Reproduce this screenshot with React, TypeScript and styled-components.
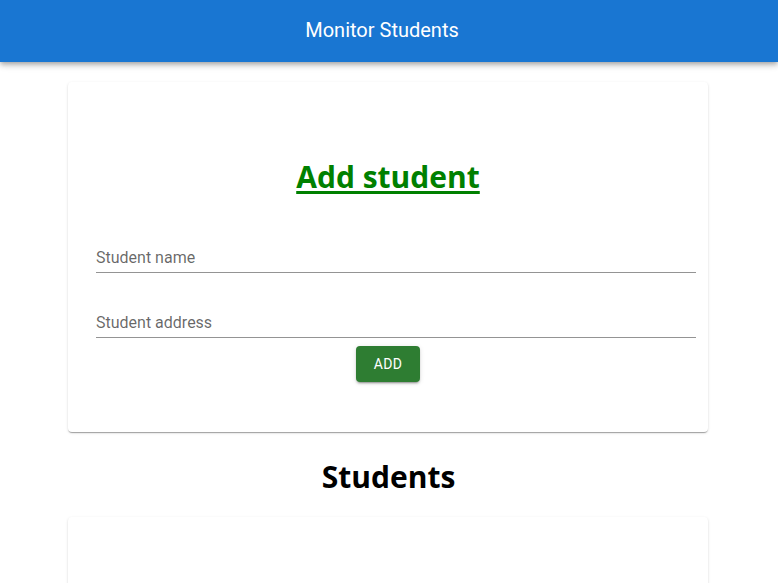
import React from "react";
import styled, { createGlobalStyle } from "styled-components";

const GlobalStyle = createGlobalStyle`
  html, body { margin: 0; padding: 0; background: #ffffff; }
  body { font-family: Roboto, "Liberation Sans", Arial, sans-serif; }
  * { box-sizing: border-box; }
`;

const AppBar = styled.header`
  height: 62px;
  padding: 0 14px 2px 0;
  background: #1976d2;
  color: #ffffff;
  display: flex;
  align-items: center;
  justify-content: center;
  box-shadow: 0px 2px 4px -1px rgba(0,0,0,0.2), 0px 4px 5px 0px rgba(0,0,0,0.14), 0px 1px 10px 0px rgba(0,0,0,0.12);
  position: relative;
  z-index: 1;
`;

const AppTitle = styled.div`
  font-family: Roboto, "Liberation Sans", Arial, sans-serif;
  font-size: 20px;
  font-weight: 400;
  line-height: 24px;
`;

const Main = styled.main`
  display: flex;
  flex-direction: column;
  align-items: center;
  padding-top: 20px;
`;

const Card = styled.section<{ $pt?: number; $pb?: number }>`
  width: 640px;
  margin-left: -2px;
  background: #ffffff;
  border-radius: 4px;
  box-shadow: 0px 2px 1px -1px rgba(0,0,0,0.2), 0px 1px 1px 0px rgba(0,0,0,0.14), 0px 1px 3px 0px rgba(0,0,0,0.12);
  padding: ${(p) => p.$pt ?? 0}px 12px ${(p) => p.$pb ?? 0}px 28px;
  display: flex;
  flex-direction: column;
  min-height: 100px;
`;

const Heading = styled.h1<{ $color: string; $underline?: boolean; $shift?: number }>`
  margin: 0 0 0 ${(p) => p.$shift ?? 0}px;
  font-family: "Open Sans", "Noto Sans", sans-serif;
  font-weight: 700;
  font-size: 30px;
  line-height: 40px;
  text-align: center;
  color: ${(p) => p.$color};
  text-decoration: ${(p) => (p.$underline ? "underline" : "none")};
  text-decoration-thickness: 3px;
  text-underline-offset: 3px;
`;

const Field = styled.label<{ $mt: number }>`
  display: block;
  margin-top: ${(p) => p.$mt}px;
  padding: 1px 0 2px;
  border-bottom: 1px solid rgba(0, 0, 0, 0.42);
`;

const FieldLabel = styled.span`
  display: block;
  font-family: Roboto, "Liberation Sans", Arial, sans-serif;
  font-size: 16px;
  line-height: 24px;
  color: rgba(0, 0, 0, 0.6);
`;

const ButtonRow = styled.div`
  display: flex;
  justify-content: center;
  margin-top: 8px;
  margin-left: -16px;
`;

const Button = styled.button`
  height: 36px;
  min-width: 64px;
  padding: 6px 16px;
  border: none;
  border-radius: 4px;
  background: #2e7d32;
  color: #ffffff;
  font-family: Roboto, "Liberation Sans", Arial, sans-serif;
  font-weight: 400;
  font-size: 14px;
  letter-spacing: 0.4px;
  text-transform: uppercase;
  box-shadow: 0px 3px 1px -2px rgba(0,0,0,0.2), 0px 2px 2px 0px rgba(0,0,0,0.14), 0px 1px 5px 0px rgba(0,0,0,0.12);
  cursor: pointer;
`;

const SectionTitle = styled.div`
  margin: 25px 0 20px;
`;

export default function App() {
  return (
    <>
      <GlobalStyle />
      <AppBar>
        <AppTitle>Monitor Students</AppTitle>
      </AppBar>
      <Main>
        <Card $pt={75} $pb={50}>
          <Heading $color="#008000" $underline $shift={-16}>
            Add student
          </Heading>
          <Field $mt={48}>
            <FieldLabel>Student name</FieldLabel>
          </Field>
          <Field $mt={37}>
            <FieldLabel>Student address</FieldLabel>
          </Field>
          <ButtonRow>
            <Button>Add</Button>
          </ButtonRow>
        </Card>
        <SectionTitle>
          <Heading $color="#000000" $shift={-1}>Students</Heading>
        </SectionTitle>
        <Card />
      </Main>
    </>
  );
}
